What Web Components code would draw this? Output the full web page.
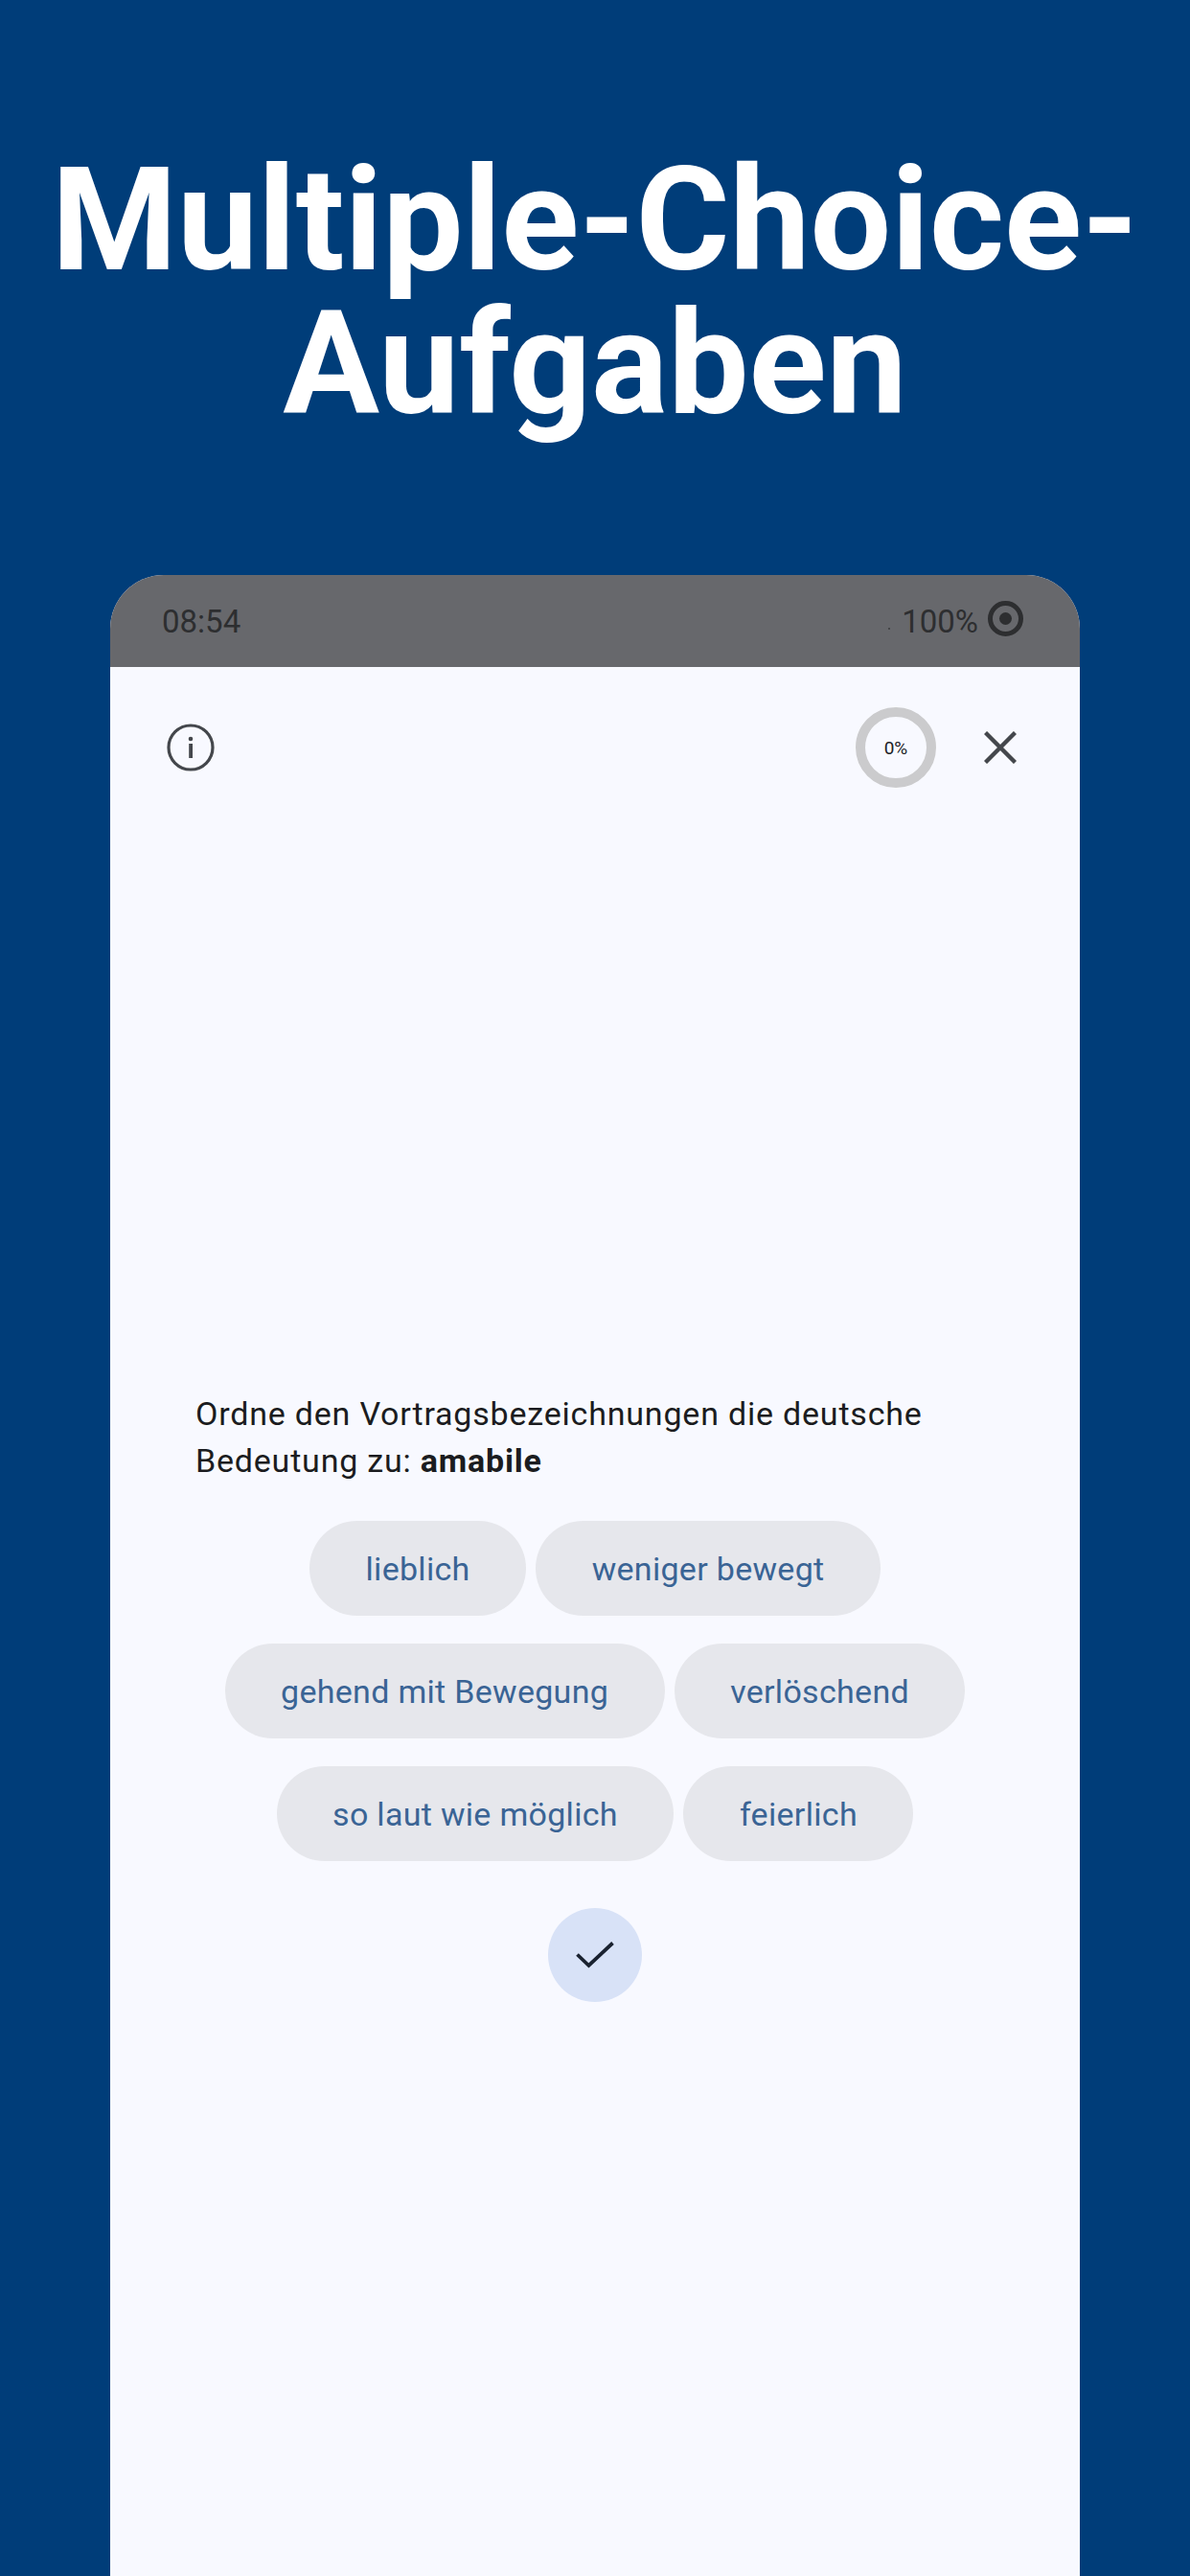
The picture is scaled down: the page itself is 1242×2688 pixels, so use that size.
<!DOCTYPE html>
<html lang="de"><head><meta charset="utf-8"><title>Multiple-Choice-Aufgaben</title>
<style>
html,body{margin:0;padding:0;background:#003d79;font-family:Roboto,"Liberation Sans",sans-serif}
body{width:1242px;height:2688px;overflow:hidden;display:flex;flex-direction:column}
</style></head><body>
<promo-title>Multiple-Choice-<br>Aufgaben</promo-title>
<phone-frame>
  <status-bar slot="status"></status-bar>
  <quiz-toolbar></quiz-toolbar>
  <quiz-question>
    <span slot="prompt">Ordne den Vortragsbezeichnungen die deutsche<br>Bedeutung zu: <b>amabile</b></span>
    <answer-chip>lieblich</answer-chip><answer-chip>weniger bewegt</answer-chip>
    <answer-chip>gehend mit Bewegung</answer-chip><answer-chip>verlöschend</answer-chip>
    <answer-chip>so laut wie möglich</answer-chip><answer-chip>feierlich</answer-chip>
  </quiz-question>
</phone-frame>
<script>
function def(name, html){
  customElements.define(name, class extends HTMLElement{
    constructor(){super();this.attachShadow({mode:'open'}).innerHTML=html;}
  });
}
def('promo-title',`<style>:host{display:block;box-sizing:border-box;height:600px;padding-top:155px;text-align:center;color:#fff;font:700 150px/150px Roboto,sans-serif;white-space:nowrap}</style><slot></slot>`);
def('phone-frame',`<style>:host{display:flex;flex-direction:column;flex:1;margin:0 115px;background:#f8f9ff;border-radius:56px 56px 0 0;overflow:hidden}</style><slot name="status"></slot><slot></slot>`);
def('status-bar',`<style>
:host{display:flex;align-items:center;box-sizing:border-box;height:96px;padding:0 59px 0 54px;background:#67686c;color:#2d2e30;font:400 33px/1 Roboto,sans-serif}
.t{flex:1}.dot{width:2px;height:2px;border-radius:50%;background:#3a3b3d;margin:16px 12px 0 0}
svg{width:37px;height:37px;margin:0 0 6px 10px;display:block}
</style><span class="t">08:54</span><span class="dot"></span><span>100%</span>
<svg viewBox="0 0 37 37"><circle cx="18.500" cy="18.500" r="16" fill="none" stroke="#2d2e30" stroke-width="5"/><circle cx="18.500" cy="18.500" r="6.500" fill="#2d2e30"/></svg>`);
def('quiz-toolbar',`<style>
:host{display:flex;align-items:center;box-sizing:border-box;height:168px;padding:0 66px 0 59px}
.info{width:50px;height:50px;display:block;flex:none}
.sp{flex:1}
.ring{box-sizing:border-box;width:84px;height:84px;border:10px solid #cbcbcd;border-radius:50%;display:flex;align-items:center;justify-content:center;color:#202226;font:400 19px/1 Roboto,sans-serif}
.x{width:34px;height:34px;display:block;margin-left:50px;flex:none}
</style>
<svg class="info" viewBox="0 0 50 50"><circle cx="25" cy="25" r="23" fill="none" stroke="#44474c" stroke-width="3.200"/><circle cx="25" cy="16" r="2.300" fill="#44474c"/><rect x="23.200" y="21" width="3.800" height="15" fill="#44474c"/></svg>
<span class="sp"></span><span class="ring">0%</span>
<svg class="x" viewBox="0 0 34 34"><path d="M1.500 1.500 32.500 32.500M32.500 1.500 1.500 32.500" fill="none" stroke="#44474c" stroke-width="4.400"/></svg>`);
def('quiz-question',`<style>
:host{display:block;padding:587px 0 0}
.p{margin:0 60px 0 89px;color:#1b1c20;font:400 34px/49px Roboto,sans-serif;letter-spacing:.8px}
.c{display:flex;flex-wrap:wrap;justify-content:center;gap:29px 10px;margin:38px 70px 0}
.ok{box-sizing:border-box;width:98px;height:98px;margin:49px auto 0;border-radius:50%;background:#d8e2f7;display:flex;align-items:center;justify-content:center}
svg{width:40px;height:28px;display:block}
</style><div class="p"><slot name="prompt"></slot></div><div class="c"><slot></slot></div>
<div class="ok"><svg viewBox="0 0 40 28"><path d="M1.500 13.500 13.500 25 38.500 1.500" fill="none" stroke="#1a2230" stroke-width="3.800"/></svg></div>`);
def('answer-chip',`<style>:host{display:block;box-sizing:border-box;height:99px;padding:0 58.500px;border-radius:50px;background:#e6e7ec;color:#3a6495;font:400 34px/101px Roboto,sans-serif;white-space:nowrap;letter-spacing:.3px}</style><slot></slot>`);
</script></body></html>
